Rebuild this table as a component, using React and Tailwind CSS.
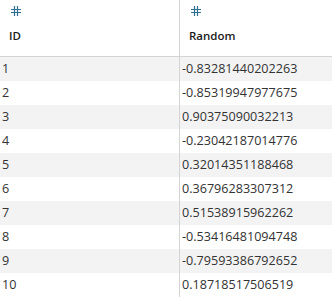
import React from "react";

const rows = [
  ["1", "-0.83281440202263"],
  ["2", "-0.85319947977675"],
  ["3", "0.90375090032213"],
  ["4", "-0.23042187014776"],
  ["5", "0.32014351188468"],
  ["6", "0.36796283307312"],
  ["7", "0.51538915962262"],
  ["8", "-0.53416481094748"],
  ["9", "-0.79593386792652"],
  ["10", "0.18718517506519"],
];

function Hash() {
  return (
    <svg width="10" height="10" viewBox="0 0 10 10" className="block">
      <path d="M3.5 0V10M6.5 0V10M0 3.5H10M0 6.5H10" stroke="#2f6f8f" strokeWidth="1.2" fill="none" />
    </svg>
  );
}

export default function App() {
  return (
    <div className="w-[332px] h-[297px] overflow-hidden bg-white text-[#333]" style={{ fontFamily: '"Open Sans", sans-serif' }}>
      <div className="grid grid-cols-[180px_1fr] h-[57px] border-b border-[#d4d4d4]">
        <div className="border-r border-[#d4d4d4] pl-[11px] pt-[6px]">
          <Hash />
          <div className="mt-[12px] -ml-[2px] text-[11.5px] font-semibold text-[#1a1a1a] leading-[16px]">ID</div>
        </div>
        <div className="pl-[11px] pt-[6px]">
          <Hash />
          <div className="mt-[12px] -ml-[2px] text-[11.5px] font-semibold text-[#1a1a1a] leading-[16px]">Random</div>
        </div>
      </div>
      {rows.map(([id, v], i) => (
        <div key={id} className={`grid grid-cols-[180px_1fr] h-[24px] ${i % 2 === 0 ? "bg-[#f3f3f3]" : "bg-white"}`}>
          <div className="border-r border-[#d4d4d4] pl-[2px] text-[12.6px] leading-[24px]">{id}</div>
          <div className="pl-[2px] text-[12.6px] leading-[24px]">{v}</div>
        </div>
      ))}
    </div>
  );
}
